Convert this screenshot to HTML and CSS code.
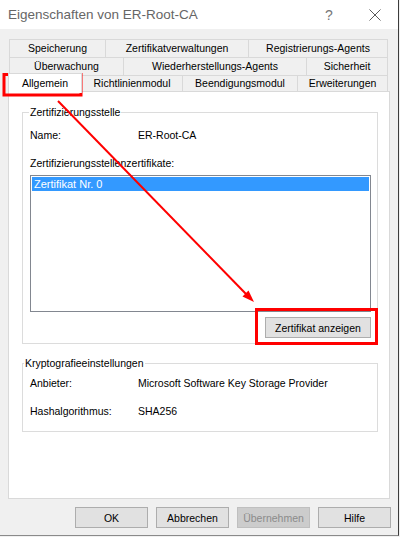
FILE: index.html
```html
<!DOCTYPE html>
<html lang="de">
<head>
    <meta charset="utf-8">
    <title>Eigenschaften von ER-Root-CA</title>
    <link rel="stylesheet" href="styles.css">
</head>
<body>
    <div class="window">
        <div class="titlebar">
            <span class="title">Eigenschaften von ER-Root-CA</span>
            <span class="help">?</span>
            <span class="close">
                <svg width="12" height="12" viewBox="0 0 12 12">
                    <path d="M0.5 0.5 L11.5 11.5 M11.5 0.5 L0.5 11.5" stroke="#5a5a5a" stroke-width="1" fill="none"/>
                </svg>
            </span>
        </div>

        <div class="tabs">
            <div class="tab-row">
                <div class="tab t-speicherung">Speicherung</div>
                <div class="tab t-verwaltung">Zertifikatverwaltungen</div>
                <div class="tab t-registrierung">Registrierungs-Agents</div>
            </div>
            <div class="tab-row">
                <div class="tab t-ueberwachung">Überwachung</div>
                <div class="tab t-wiederherstellung">Wiederherstellungs-Agents</div>
                <div class="tab t-sicherheit">Sicherheit</div>
            </div>
            <div class="tab-row last">
                <div class="tab active">Allgemein</div>
                <div class="tab t-richtlinien">Richtlinienmodul</div>
                <div class="tab t-beendigung">Beendigungsmodul</div>
                <div class="tab t-erweiterungen">Erweiterungen</div>
            </div>
        </div>

        <div class="panel">
            <fieldset class="group group-ca">
                <legend>Zertifizierungsstelle</legend>
                <div class="field name-row">
                    <span class="label">Name:</span>
                    <span>ER-Root-CA</span>
                </div>
                <div class="field certs-label">Zertifizierungsstellenzertifikate:</div>
                <div class="listbox">
                    <div class="item selected">Zertifikat Nr. 0</div>
                </div>
                <div class="actions">
                    <button class="btn btn-show">Zertifikat anzeigen</button>
                </div>
            </fieldset>

            <fieldset class="group group-crypto">
                <legend>Kryptografieeinstellungen</legend>
                <div class="field provider-row">
                    <span class="label">Anbieter:</span>
                    <span>Microsoft Software Key Storage Provider</span>
                </div>
                <div class="field hash-row">
                    <span class="label">Hashalgorithmus:</span>
                    <span>SHA256</span>
                </div>
            </fieldset>
        </div>

        <div class="footer">
            <button class="btn">OK</button>
            <button class="btn">Abbrechen</button>
            <button class="btn" disabled>Übernehmen</button>
            <button class="btn">Hilfe</button>
        </div>

        <!-- Markierungen aus dem Screenshot -->
        <svg class="annotations" width="400" height="537" viewBox="0 0 400 537">
            <rect x="4" y="74.5" width="77" height="20.5" fill="none" stroke="#ff0000" stroke-width="3"/>
            <rect x="256.5" y="309.5" width="120" height="34" fill="none" stroke="#ff0000" stroke-width="3"/>
            <line x1="58" y1="101" x2="247" y2="295" stroke="#ff0000" stroke-width="2"/>
            <polygon points="254,302 242.5,296.5 248.5,290.5" fill="#ff0000"/>
        </svg>
    </div>
</body>
</html>
```

FILE: styles.css
```css
* {
    box-sizing: border-box;
}
body {
    margin: 0;
    background: #f0f0f0;
    font-family: "Liberation Sans", Arial, sans-serif;
    font-size: 10.5px;
    color: #000;
}
.window {
    position: relative;
    width: 399px;
    height: 536px;
    background: #f0f0f0;
    border-right: 1px solid #3c3c3c;
    border-bottom: 1px solid #8a8a8a;
}
.titlebar {
    display: flex;
    align-items: center;
    height: 29px;
    background: #fff;
    font-size: 13.5px;
    color: #666;
}
.title {
    flex: 1;
    margin-left: 8px;
}
.help,
.close {
    width: 46px;
    height: 29px;
    display: flex;
    align-items: center;
    justify-content: center;
}
.help {
    font-size: 14px;
    color: #777;
}

/* Karteireiter */
.tabs {
    margin-top: 10px;
}
.tab-row {
    display: flex;
    height: 18px;
    margin-left: 9px;
    border-left: 1px solid #d9d9d9;
}
.tab {
    height: 18px;
    border-top: 1px solid #d9d9d9;
    border-right: 1px solid #d9d9d9;
    line-height: 17px;
    text-align: center;
    white-space: nowrap;
    overflow: hidden;
}
.tab-row.last {
    height: 16px;
    margin-left: 8px;
    border-left: none;
    align-items: flex-start;
}
.tab-row.last .tab {
    height: 16px;
    line-height: 15px;
}
.tab-row.last .tab.active {
    position: relative;
    z-index: 1;
    width: 74px;
    height: 20px;
    margin-top: -2px;
    line-height: 19px;
    background: #fff;
    border-left: 1px solid #d9d9d9;
}
.t-speicherung { width: 96px; }
.t-verwaltung { width: 143px; }
.t-registrierung { width: 139px; }
.t-ueberwachung { width: 114px; }
.t-wiederherstellung { width: 183px; }
.t-sicherheit { width: 81px; }
.t-richtlinien { width: 101px; }
.t-beendigung { width: 115px; }
.t-erweiterungen { width: 90px; }

/* Inhalt */
.panel {
    width: 382px;
    height: 408px;
    margin-left: 8px;
    background: #fff;
    border: 1px solid #d9d9d9;
}
.group {
    width: 356px;
    margin: 14px 0 0 13px;
    padding: 0 0 5px 0;
    border: 1px solid #dcdcdc;
    min-inline-size: 0;
}
.group legend {
    margin-left: 6px;
    padding: 0 1px;
    line-height: 13px;
}
.group-crypto {
    margin-top: 13px;
    padding-bottom: 12px;
}
.group-crypto legend {
    margin-left: 1px;
}
.field {
    display: flex;
    height: 16px;
    line-height: 16px;
    padding-left: 7px;
}
.label {
    width: 108px;
}
.name-row {
    margin-top: 8px;
}
.certs-label {
    margin-top: 12px;
}
.provider-row {
    margin-top: 5px;
}
.hash-row {
    margin-top: 12px;
}
.listbox {
    width: 341px;
    height: 137px;
    margin: 4px 0 0 7px;
    padding: 1px;
    border: 1px solid #828790;
}
.item {
    height: 14px;
    line-height: 14px;
    padding-left: 2px;
    font-size: 11px;
}
.item.selected {
    background: #3399ff;
    color: #fff;
}
.actions {
    display: flex;
    justify-content: flex-end;
    margin-top: 5px;
    padding-right: 6px;
}

/* Schaltflächen */
.btn {
    width: 73px;
    height: 21px;
    padding: 0;
    font: inherit;
    color: #000;
    background: #e1e1e1;
    border: 1px solid #adadad;
}
.btn-show {
    width: 106px;
}
.btn:disabled {
    color: #8b8b8b;
    background: #cccccc;
    border-color: #bfbfbf;
}
.footer {
    display: flex;
    justify-content: flex-end;
    gap: 8px;
    margin-top: 8px;
    padding-right: 7px;
}

.annotations {
    position: absolute;
    top: 0;
    left: 0;
    pointer-events: none;
}
```
